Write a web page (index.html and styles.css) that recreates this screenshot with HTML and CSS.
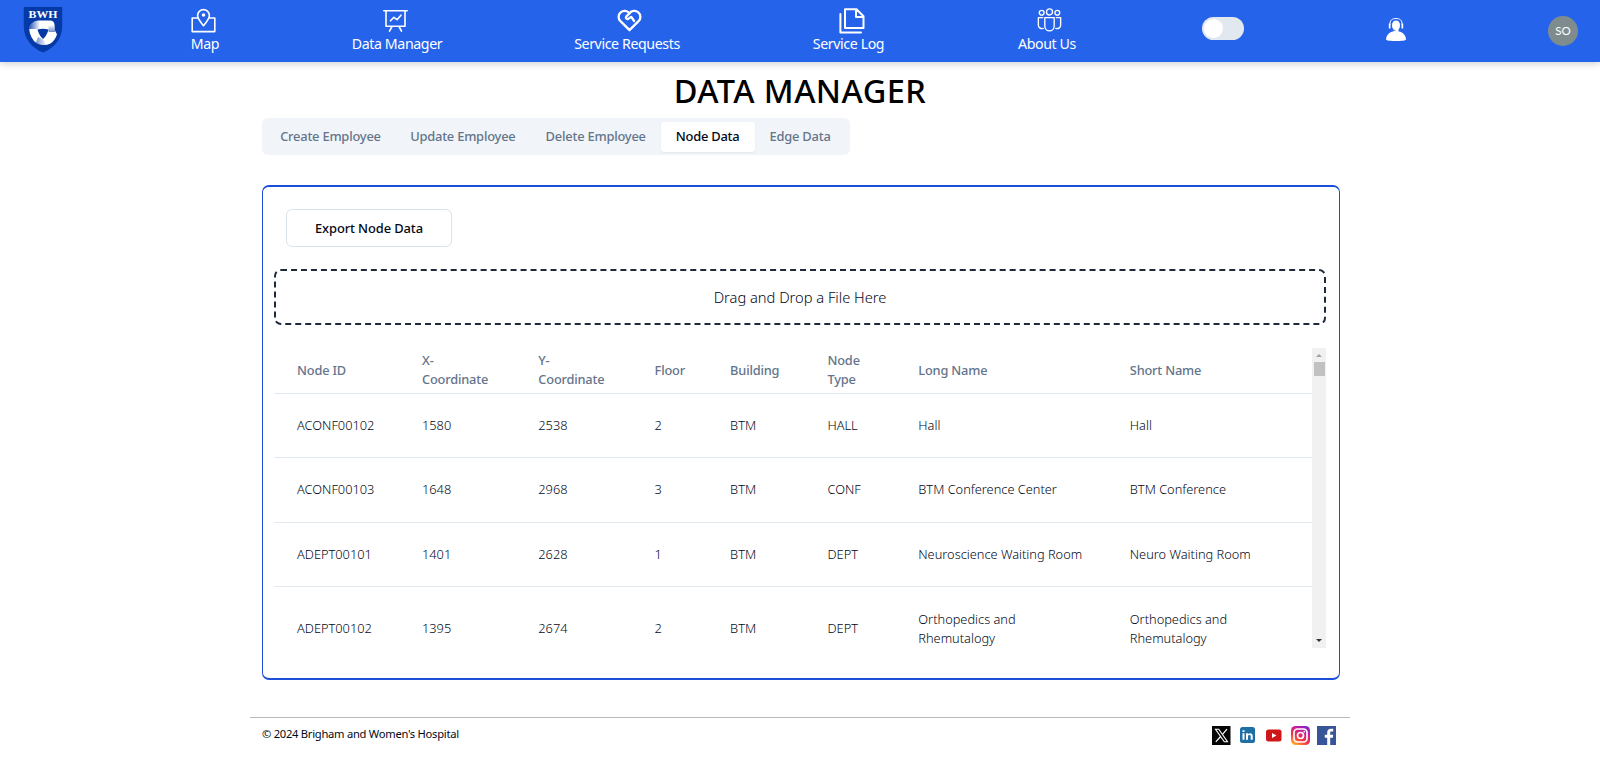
FILE: index.html
```html
<!DOCTYPE html>
<html lang="en">
<head>
<meta charset="utf-8">
<title>Data Manager</title>
<link rel="stylesheet" href="styles.css">
</head>
<body>
<header class="nav">
  <a class="nav-logo">
    <svg width="40" height="47" viewBox="0 0 40 47">
      <defs>
        <linearGradient id="g1" x1="0" y1="0" x2="1" y2="0"><stop offset="0" stop-color="#0439a6" stop-opacity=".9"/><stop offset="1" stop-color="#0439a6" stop-opacity="0"/></linearGradient>
        <linearGradient id="g2" x1="0" y1="0" x2="0" y2="1"><stop offset="0" stop-color="#0439a6" stop-opacity="0"/><stop offset="1" stop-color="#0439a6" stop-opacity=".6"/></linearGradient>
        <linearGradient id="g3" x1="1" y1="0" x2="0" y2="0"><stop offset="0" stop-color="#0439a6" stop-opacity="0"/><stop offset="1" stop-color="#0439a6" stop-opacity=".6"/></linearGradient>
      </defs>
      <path d="M.8 1h38.400v20C39 33 31 42 20 46.600 9 42 1 33 .8 21Z" fill="#0439a6"/>
      <text x="20" y="11.700" class="logo-text" text-anchor="middle" textLength="29" lengthAdjust="spacingAndGlyphs">BWH</text>
      <path d="M6 22Q8 15 15 14.500H27q4 0 4.500 4l.5 6 2 4q-2 6-6.500 9-6.500 3-13.500 0Q7 33 6 22Z" fill="#fff"/>
      <path d="M5.500 23Q7 14 17 14v9Z" fill="url(#g1)"/>
      <path d="M25.500 19H32v7h-6.500Z" fill="url(#g2)"/>
      <path d="M12 39 15 31l5 2.500 4 6Z" fill="url(#g3)"/>
      <path d="M14.500 23.500q5.500-1.500 11 0-1.500 6-5.500 9.500-4-3.500-5.500-9.500Z" fill="#0439a6"/>
    </svg>
  </a>
  <a class="nav-item">
    <svg class="icon icon-map" viewBox="0 0 25 25"><path d="M6.500 10H1.200v13.600h22.600V10h-5.300"/><path d="M12.500 17.700C9 13.600 6.600 10.800 6.600 7.500a5.900 5.900 0 0 1 11.800 0c0 3.300-2.400 6.100-5.900 10.200Z"/><circle cx="12.500" cy="7" r="1" fill="#fff"/></svg>
    <span class="label">Map</span>
  </a>
  <a class="nav-item">
    <svg class="icon icon-data" viewBox="0 0 25 25"><path d="M.8 2.800h23.400M3 2.800v15.500h19V2.800M9 18.500l-2.500 4.700M16 18.500l2.500 4.700M7.500 12.800l3.400-3.500 3.100 2.400 4-4.500"/></svg>
    <span class="label">Data Manager</span>
  </a>
  <a class="nav-item">
    <svg class="icon icon-heart" viewBox="0 0 24 24"><path d="M19.500 12.570 12 20l-7.500-7.430A5 5 0 1 1 12 6.010a5 5 0 1 1 7.500 6.570"/><path d="M12 6 9.300 8.800c-.8 1 .2 2.300 1.400 2 1-.3 1.700-1.700 2.800-1.800L15.800 12.400"/></svg>
    <span class="label">Service Requests</span>
  </a>
  <a class="nav-item">
    <svg class="icon icon-log" viewBox="0 0 26 26"><path d="M6 1.200h11.500l7 7V20H6ZM17 1.700V9h7M1.400 6v18.600H22"/></svg>
    <span class="label">Service Log</span>
  </a>
  <a class="nav-item">
    <svg class="icon icon-about" viewBox="0 0 24 24"><circle cx="12" cy="3.800" r="2.900"/><circle cx="4.500" cy="4.600" r="2.300"/><circle cx="19.500" cy="4.600" r="2.300"/><path d="M7.500 9.200h9v7.800c0 3-2 5-4.500 5s-4.500-2-4.500-5ZM5.500 9.200H1.300v7c0 2.500 2 4 4.700 3.400M18.500 9.200h4.200v7c0 2.500-2 4-4.700 3.400"/></svg>
    <span class="label">About Us</span>
  </a>
  <div class="nav-cell"><span class="switch"><span class="switch-thumb"></span></span></div>
  <div class="nav-cell agent">
    <svg width="22" height="25" viewBox="0 0 22 25"><path d="M1 22.500C1 18 5 15 8 14.500h6c3 .5 7 3.500 7 8 0 2-20 2-20 0Z" fill="#fff"/><path d="M8.500 12h5v5h-5Z" fill="#fff"/><ellipse cx="11" cy="8.400" rx="4" ry="5" fill="#fff"/><path d="M5 8C4.500 3 7.500 1.500 11 1.500s6.500 1.500 6 6.500" fill="none" stroke="#fff" stroke-width="1"/><path d="M3.800 6.500h1.700v5H3.800ZM16.500 6.500h1.700v5h-1.700Z" fill="#fff"/><path d="M6 11.500q1.500 2 4.500 2" fill="none" stroke="#2563eb" stroke-width=".8"/></svg>
  </div>
  <div class="nav-cell avatar-cell"><span class="avatar">SO</span></div>
</header>

<main class="page">
  <h1 class="title">DATA MANAGER</h1>
  <div class="tabs">
    <span class="tab tab-create">Create Employee</span>
    <span class="tab tab-update">Update Employee</span>
    <span class="tab tab-delete">Delete Employee</span>
    <span class="tab tab-node active">Node Data</span>
    <span class="tab tab-edge">Edge Data</span>
  </div>
  <section class="card">
    <button class="export">Export Node Data</button>
    <div class="dropzone">Drag and Drop a File Here</div>
    <div class="table-wrap">
      <div class="table">
        <div class="row head"><span>Node ID</span><span>X-<br>Coordinate</span><span>Y-<br>Coordinate</span><span>Floor</span><span>Building</span><span>Node<br>Type</span><span>Long Name</span><span>Short Name</span></div>
        <div class="row"><span>ACONF00102</span><span>1580</span><span>2538</span><span>2</span><span>BTM</span><span>HALL</span><span>Hall</span><span>Hall</span></div>
        <div class="row"><span>ACONF00103</span><span>1648</span><span>2968</span><span>3</span><span>BTM</span><span>CONF</span><span>BTM Conference Center</span><span>BTM Conference</span></div>
        <div class="row"><span>ADEPT00101</span><span>1401</span><span>2628</span><span>1</span><span>BTM</span><span>DEPT</span><span>Neuroscience Waiting Room</span><span>Neuro Waiting Room</span></div>
        <div class="row tall"><span>ADEPT00102</span><span>1395</span><span>2674</span><span>2</span><span>BTM</span><span>DEPT</span><span>Orthopedics and<br>Rhemutalogy</span><span>Orthopedics and<br>Rhemutalogy</span></div>
      </div>
      <div class="scrollbar"><span class="arrow up"></span><span class="thumb"></span><span class="arrow down"></span></div>
    </div>
  </section>
  <footer class="footer">
    <span class="copy">© 2024 Brigham and Women's Hospital</span>
    <div class="social">
      <svg width="19" height="19" viewBox="0 0 19 19"><path d="M0 0h18.500v19H0Z" fill="#050505"/><path d="M3.500 3.300h3.200l8.800 12.400h-3.200Z" fill="none" stroke="#fff" stroke-width="1.100"/><path d="M15 3.200 10.500 8.300M8.600 10.500l-4.800 5.300" stroke="#fff" stroke-width="1.200"/></svg>
      <svg class="linkedin" width="15" height="16" viewBox="0 0 15 16"><rect width="15" height="16" rx="2.500" fill="#1d6fa5"/><path d="M2.500 6.300h2v6.500h-2ZM2.500 3.200h2v1.900h-2ZM6 6.300h2v.9c1.300-1.700 4.700-1.500 4.700 1.600v4h-2V9.300c0-1.900-2.700-1.800-2.700 0v3.500H6Z" fill="#fff"/></svg>
      <svg class="youtube" width="16" height="13" viewBox="0 0 16 13"><rect y=".5" width="15.500" height="12" rx="2.500" fill="#cf1719"/><path d="m6 4 4.500 2.500L6 9Z" fill="#fff"/></svg>
      <svg class="instagram" width="19" height="19" viewBox="0 0 19 19"><defs><linearGradient id="ig" x1=".2" y1="1" x2=".8" y2="0"><stop offset="0" stop-color="#ffb52e"/><stop offset=".35" stop-color="#f6333f"/><stop offset=".7" stop-color="#c91d9b"/><stop offset="1" stop-color="#7d24d0"/></linearGradient></defs><rect width="19" height="19" rx="4.500" fill="url(#ig)"/><rect x="3" y="3" width="13" height="13" rx="3.500" fill="none" stroke="#fff" stroke-width="1.700"/><circle cx="9.500" cy="9.500" r="3" fill="none" stroke="#fff" stroke-width="1.700"/><circle cx="13.300" cy="5.700" r=".9" fill="#fff"/></svg>
      <svg class="facebook" width="19" height="19" viewBox="0 0 19 19"><path d="M0 0h19v19H0Z" fill="#38559a"/><path d="M10.200 19v-7.300H7.800V8.800h2.400V6.500c0-2.600 1.500-3.800 3.800-3.800h2.200v2.700h-1.500c-1.200 0-1.500.5-1.500 1.400v2h3l-.4 2.900h-2.600V19Z" fill="#fff"/></svg>
    </div>
  </footer>
</main>
</body>
</html>
```
FILE: styles.css
```css
* { box-sizing: border-box; }
body { margin: 0; height: 773px; overflow: hidden; background: #fff; color: #020817; font-family: "Noto Sans", "Open Sans", sans-serif; }
.nav { display: grid; grid-template-columns: 85px 240px 144px 316px 127px 270px 81px 266px 68px; height: 61.500px; background: #2563eb; box-shadow: 0 2px 7px rgba(0,0,0,.18); }
.nav-logo { display: flex; justify-content: center; padding-top: 6px; padding-left: 1px; }
.logo-text { font: bold 11px "Liberation Serif", serif; fill: #fff; }
.nav-item { display: flex; flex-direction: column; align-items: center; padding-top: 8px; }
.icon { width: 25px; height: 25px; flex: none; fill: none; stroke: #fff; stroke-width: 1.600; stroke-linecap: round; stroke-linejoin: round; }
.icon-map { margin-right: 3px; }
.icon-data { margin-right: 3px; }
.icon-heart { width: 29px; height: 29px; margin: -2px 0 -2px 5px; stroke-width: 1.900; }
.icon-log { width: 26px; height: 26px; margin: 0 -7px -1px 0; stroke-width: 2; }
.icon-about { margin: 0 -5px 0 0; stroke-width: 1.300; }
.label { color: #fff; font-size: 14.200px; line-height: 21px; letter-spacing: -.4px; white-space: nowrap; }
.nav-cell { display: flex; justify-content: center; align-items: flex-start; padding-top: 17px; }
.avatar-cell { padding-top: 16px; }
.switch { width: 42px; height: 23px; padding: 2px; border-radius: 12px; background: #e2e8f0; }
.switch-thumb { display: block; width: 19px; height: 19px; border-radius: 50%; background: #fff; }
.avatar { width: 30px; height: 30px; border-radius: 50%; background: #7f8c8d; color: #fff; font: 11.500px/30px Lato, sans-serif; text-align: center; }
.page { width: 1100px; margin: 0 auto; }
.title { margin: 7px 0 0; font-size: 32.500px; line-height: 44px; font-weight: 500; letter-spacing: .45px; text-align: center; color: #000; }
.tabs { display: flex; margin: 5px 0 0 12px; width: 587.500px; height: 37.500px; padding: 4px; border-radius: 6px; background: #f1f5f9; }
.tab { display: flex; justify-content: center; height: 30px; border-radius: 4px; color: #64748b; font-size: 12.900px; line-height: 28px; font-weight: 500; letter-spacing: -.22px; white-space: nowrap; }
.tab-create { width: 129px; }
.tab-update { width: 136px; }
.tab-delete { width: 130px; }
.tab-node { width: 94px; }
.tab-edge { width: 91px; }
.active { background: #fff; color: #020817; box-shadow: 0 1px 2px rgba(0,0,0,.06); }
.card { display: flex; flex-direction: column; align-items: flex-start; margin: 30px 10.500px 0 12px; height: 495px; padding: 22px 11px; border: 1.500px solid #1d4ed8; border-width: 2px 1px; border-radius: 7px; }
.export { width: 166px; height: 38px; margin: 0 0 0 12px; padding: 0; border: 1px solid #dbe3ee; border-radius: 6px; background: #fff; color: #020817; font: 500 12.900px "Noto Sans", sans-serif; letter-spacing: -.1px; }
.dropzone { display: flex; align-items: center; justify-content: center; width: 1052px; height: 56px; margin-top: 22px; border: 2px dashed #1e293b; border-radius: 7px; font-size: 14.700px; letter-spacing: -.02px; font-weight: 300; }
.table-wrap { display: flex; width: 1052px; height: 300px; margin-top: 23px; overflow: hidden; }
.table { flex: 1; }
.row { display: grid; grid-template-columns: 125px 116.300px 116.300px 75.500px 97.400px 90.800px 211.500px 1fr; align-items: center; height: 64.600px; padding-left: 23px; border-bottom: 1px solid #e2e8f0; font-size: 12.800px; line-height: 19px; letter-spacing: 0; font-weight: 300; white-space: nowrap; }
.head { height: 45.500px; font-weight: 500; color: #64748b; letter-spacing: -.18px; }
.tall { height: 83px; border: 0; }
.scrollbar { display: flex; flex-direction: column; align-items: center; width: 14px; background: #f1f1f1; }
.arrow { border: 3px solid transparent; }
.up { margin-top: 3px; border-bottom-color: #a3a3a3; }
.thumb { width: 11px; height: 14px; margin-top: 5px; background: #c1c1c1; }
.down { margin-top: auto; margin-bottom: 3px; border-top-color: #333; }
.footer { display: flex; justify-content: space-between; margin-top: 37px; padding: 8px 14px 0 12px; border-top: 1px solid #b9b9b9; }
.copy { font-size: 11.200px; line-height: 16px; letter-spacing: -.27px; }
.social { display: flex; align-items: center; height: 18px; }
.linkedin { margin-left: 9px; }
.youtube { margin-left: 11px; }
.instagram { margin-left: 9px; }
.facebook { margin-left: 7px; }
```
